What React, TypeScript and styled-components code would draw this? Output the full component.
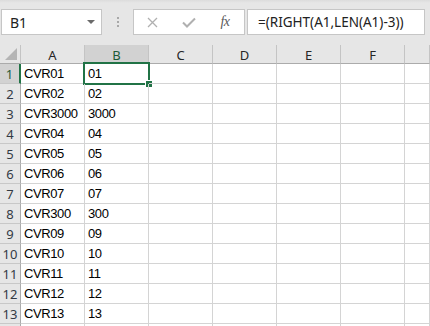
import React from "react";
import styled, { createGlobalStyle } from "styled-components";

const GlobalStyle = createGlobalStyle`
  html, body { margin: 0; padding: 0; background: #ffffff; }
  body { overflow: hidden; font-family: "Liberation Sans", Arial, sans-serif; }
  * { box-sizing: border-box; }
`;

const Page = styled.div`
  width: 430px;
  height: 326px;
  overflow: hidden;
  display: flex;
  flex-direction: column;
`;

const Toolbar = styled.div`
  height: 45px;
  flex: none;
  display: flex;
  align-items: flex-start;
  padding: 9px 0 0 1px;
  background: linear-gradient(#dcdcdc 0px, #e6e6e6 3px, #e6e6e6 100%);
`;

const Box = styled.div<{ $w: number }>`
  width: ${(p) => p.$w}px;
  height: 26px;
  background: #ffffff;
  border: 1px solid #c6c6c6;
  display: flex;
  align-items: center;
  flex: none;
`;

const Spacer = styled.div`
  width: 2px;
  flex: none;
`;

const NameText = styled.span`
  font-family: "Noto Sans", "Open Sans", sans-serif;
  font-size: 14px;
  color: #222;
  padding-left: 8px;
  flex: 1;
`;

const Arrow = styled.span`
  width: 0;
  height: 0;
  border-left: 4px solid transparent;
  border-right: 4px solid transparent;
  border-top: 4px solid #6a6a6a;
  margin-right: 6px;
`;

const Grip = styled.div`
  width: 31px;
  height: 26px;
  flex: none;
  display: flex;
  flex-direction: column;
  align-items: center;
  justify-content: center;
  gap: 2px;
  & > i {
    display: block;
    width: 2px;
    height: 2px;
    background: #a8a8a8;
  }
`;

const IconSlot = styled.div<{ $w: number }>`
  width: ${(p) => p.$w}px;
  height: 100%;
  display: flex;
  align-items: center;
  justify-content: center;
  flex: none;
`;

const Fx = styled.span`
  font-family: "Liberation Serif", "Times New Roman", serif;
  font-style: italic;
  font-size: 14px;
  color: #5a5a5a;
  letter-spacing: -0.5px;
`;

const FormulaText = styled.span`
  font-family: "Noto Sans", "Open Sans", sans-serif;
  font-size: 13.5px;
  color: #222;
  padding-left: 10px;
  white-space: nowrap;
`;

const Sheet = styled.div`
  display: grid;
  grid-template-columns: 21px repeat(6, 64px) 25px;
  grid-template-rows: 19px;
  grid-auto-rows: 20px;
`;

const HeaderCell = styled.div<{ $sel?: boolean }>`
  background: ${(p) => (p.$sel ? "#d2d2d2" : "#e6e6e6")};
  border-right: 1px solid #c4c4c4;
  border-bottom: 1px solid ${(p) => (p.$sel ? "#217346" : "#ababab")};
  display: flex;
  align-items: center;
  justify-content: center;
  font-family: "Noto Sans", "Open Sans", sans-serif;
  font-size: 13px;
  color: ${(p) => (p.$sel ? "#1d5a37" : "#262626")};
  padding-top: 1px;
`;

const Corner = styled.div`
  background: #e6e6e6;
  border-right: 1px solid #c4c4c4;
  border-bottom: 1px solid #ababab;
  display: flex;
  align-items: flex-end;
  justify-content: flex-end;
  padding: 0 3px 3px 0;
`;

const CornerTri = styled.div`
  width: 0;
  height: 0;
  border-left: 12px solid transparent;
  border-bottom: 12px solid #b4b4b4;
`;

const RowHead = styled.div<{ $sel?: boolean }>`
  background: ${(p) => (p.$sel ? "#d2d2d2" : "#e6e6e6")};
  border-right: ${(p) => (p.$sel ? "2px solid #217346" : "1px solid #ababab")};
  border-bottom: 1px solid #c8c8c8;
  display: flex;
  align-items: center;
  justify-content: center;
  font-family: "Noto Sans", "Open Sans", sans-serif;
  font-size: 13px;
  color: ${(p) => (p.$sel ? "#1d5a37" : "#333a44")};
  padding-top: 1px;
`;

const Cell = styled.div`
  position: relative;
  border-right: 1px solid #d4d4d4;
  border-bottom: 1px solid #d4d4d4;
  display: flex;
  align-items: flex-end;
  padding: 0 0 1px 3px;
  font-family: "Liberation Sans", Arial, sans-serif;
  font-size: 13px;
  letter-spacing: -0.4px;
  line-height: 16px;
  color: #000;
  white-space: nowrap;
`;

const Selection = styled.div`
  position: absolute;
  left: -2px;
  top: -2px;
  right: -2px;
  bottom: -2px;
  border: 2px solid #217346;
  pointer-events: none;
`;

const Handle = styled.div`
  position: absolute;
  right: -4px;
  bottom: -4px;
  width: 6px;
  height: 6px;
  background: #217346;
  outline: 1px solid #ffffff;
`;

const colA = ["CVR01", "CVR02", "CVR3000", "CVR04", "CVR05", "CVR06", "CVR07", "CVR300", "CVR09", "CVR10", "CVR11", "CVR12", "CVR13", ""];
const colB = ["01", "02", "3000", "04", "05", "06", "07", "300", "09", "10", "11", "12", "13", ""];
const cols = ["A", "B", "C", "D", "E", "F", ""];

export default function App() {
  return (
    <Page>
      <GlobalStyle />
      <Toolbar>
        <Box $w={101}>
          <NameText>B1</NameText>
          <Arrow />
        </Box>
        <Grip>
          <i />
          <i />
          <i />
        </Grip>
        <Box $w={112}>
          <IconSlot $w={37}>
            <svg width="11" height="11" viewBox="0 0 11 11">
              <path d="M1 1L10 10M10 1L1 10" stroke="#b0b0b0" strokeWidth="1.3" fill="none" />
            </svg>
          </IconSlot>
          <IconSlot $w={35}>
            <svg width="14" height="11" viewBox="0 0 14 11">
              <path d="M1 5.5L5 9.5L13 1.5" stroke="#b0b0b0" strokeWidth="2" fill="none" />
            </svg>
          </IconSlot>
          <IconSlot $w={38}>
            <Fx>fx</Fx>
          </IconSlot>
        </Box>
        <Spacer />
        <Box $w={178}>
          <FormulaText>=(RIGHT(A1,LEN(A1)-3))</FormulaText>
        </Box>
      </Toolbar>
      <Sheet>
        <Corner>
          <CornerTri />
        </Corner>
        {cols.map((c, i) => (
          <HeaderCell key={i} $sel={c === "B"}>
            {c}
          </HeaderCell>
        ))}
        {colA.map((a, r) => (
          <React.Fragment key={r}>
            <RowHead $sel={r === 0}>{r < 13 ? r + 1 : ""}</RowHead>
            <Cell>{a}</Cell>
            <Cell>
              {colB[r]}
              {r === 0 && (
                <Selection>
                  <Handle />
                </Selection>
              )}
            </Cell>
            <Cell />
            <Cell />
            <Cell />
            <Cell />
            <Cell />
          </React.Fragment>
        ))}
      </Sheet>
    </Page>
  );
}
